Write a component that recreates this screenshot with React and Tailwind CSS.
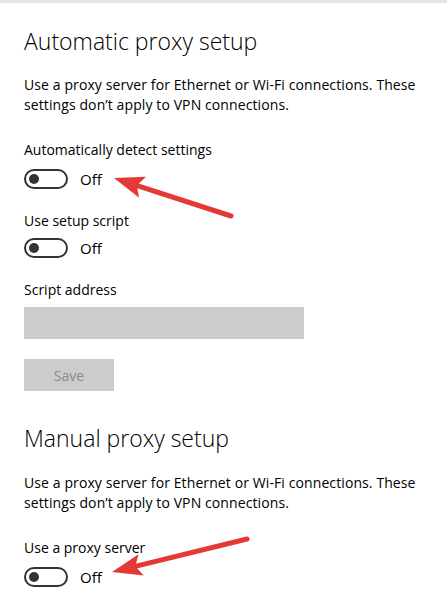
import React from 'react';

const font = { fontFamily: '"Open Sans", "Noto Sans", Arial, sans-serif' };

const Toggle = () => (
    <div className="flex items-center gap-3 h-5">
        <div className="w-[44px] h-[20px] rounded-full border-2 border-[#333] flex items-center px-[3px]">
            <div className="w-[10px] h-[10px] rounded-full bg-[#333]" />
        </div>
        <span className="text-[15px] text-black">Off</span>
    </div>
);

const Arrow = ({ x1, y1, x2, y2 }) => {
    const dx = x2 - x1;
    const dy = y2 - y1;
    const len = Math.sqrt(dx * dx + dy * dy);
    const ux = dx / len;
    const uy = dy / len;
    const headLen = 30;
    const headW = 11;
    const bx = x2 - ux * headLen;
    const by = y2 - uy * headLen;
    const pts = `${x2},${y2} ${bx - uy * headW},${by + ux * headW} ${bx + ux * 6},${by + uy * 6} ${bx + uy * headW},${by - ux * headW}`;
    return (
        <g>
            <line x1={x1} y1={y1} x2={bx + ux * 4} y2={by + uy * 4} stroke="#e53935" strokeWidth="5" strokeLinecap="round" />
            <polygon points={pts} fill="#e53935" />
        </g>
    );
};

const App = () => {
    return (
        <div className="relative w-[447px] h-[607px] bg-white overflow-hidden text-black" style={font}>
            <div className="h-[3px] bg-[#e4e4e4]" />
            <div className="px-6">
                {/* Automatic */}
                <h2 className="mt-[23px] text-[23px] font-light leading-[30px]">Automatic proxy setup</h2>
                <p className="mt-[19px] text-[14px] leading-[20px] tracking-[0.1px]">
                    Use a proxy server for Ethernet or Wi-Fi connections. These settings don’t apply to VPN connections.
                </p>

                <div className="mt-[25px] text-[14px] leading-[20px]">Automatically detect settings</div>
                <div className="mt-[9px]"><Toggle /></div>

                <div className="mt-[22px] text-[14px] leading-[20px]">Use setup script</div>
                <div className="mt-[7px]"><Toggle /></div>

                <div className="mt-[22px] text-[14px] leading-[20px]">Script address</div>
                <div className="mt-[7px] w-[280px] h-[32px] bg-[#cccccc]" />

                <div className="mt-[20px] w-[90px] h-[32px] bg-[#cccccc] flex items-center justify-center text-[14px] text-[#8a8a8a]">
                    Save
                </div>

                {/* Manual */}
                <h2 className="mt-[32px] text-[23px] font-light leading-[30px]">Manual proxy setup</h2>
                <p className="mt-[20px] text-[14px] leading-[20px] tracking-[0.1px]">
                    Use a proxy server for Ethernet or Wi-Fi connections. These settings don’t apply to VPN connections.
                </p>

                <div className="mt-[25px] text-[14px] leading-[20px]">Use a proxy server</div>
                <div className="mt-[9px]"><Toggle /></div>
            </div>

            <svg className="absolute inset-0 pointer-events-none" width="447" height="607">
                <Arrow x1={231} y1={216} x2={114} y2={178} />
                <Arrow x1={247} y1={539} x2={112} y2={572} />
            </svg>
        </div>
    );
};

export default App;
